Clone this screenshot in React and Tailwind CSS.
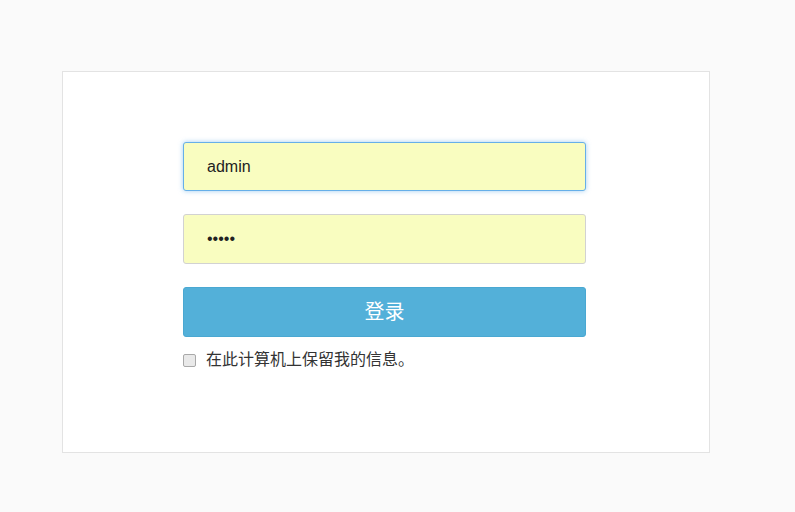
export default function App() {
  return (
    <div className="min-h-[512px] bg-[#fafafa] pt-[71px] font-['Liberation_Sans','Noto_Sans_CJK_SC',sans-serif]">
      <div className="ml-[62px] h-[382px] w-[648px] border border-[#e3e3e3] bg-white pt-[70px]">
        <form className="ml-[120px] flex w-[403px] flex-col" onSubmit={(e) => e.preventDefault()}>
          <input
            type="text"
            defaultValue="admin"
            className="h-[49px] rounded-[3px] border border-[#66afe9] bg-[#f9fdc0] pl-[23px] text-[16px] text-[#222] shadow-[0_0_5px_rgba(102,175,233,0.6)] outline-none"
          />
          <input
            type="password"
            defaultValue="admin"
            className="mt-[23px] h-[50px] rounded-[3px] border border-[#d2d2d2] bg-[#f9fdc0] pl-[23px] text-[16px] text-[#222] outline-none"
          />
          <button
            type="submit"
            className="mt-[23px] h-[50px] rounded-[3px] border border-[#4aa8d2] bg-[#53b0d9] text-[20px] text-white"
          >
            登录
          </button>
          <label className="mt-[11px] flex items-center text-[16px] leading-[24px] text-[#333]">
            <span className="h-[13px] w-[13px] rounded-[2px] border border-[#a9a9a9] bg-[#e9e9e9]"></span>
            <span className="ml-[10px]">在此计算机上保留我的信息。</span>
          </label>
        </form>
      </div>
    </div>
  );
}
